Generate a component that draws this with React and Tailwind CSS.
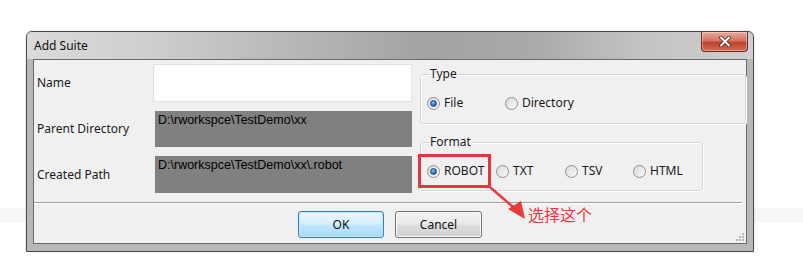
import React from "react";

function Radio({ checked }) {
  return (
    <span className="relative inline-flex h-[13px] w-[13px] shrink-0 items-center justify-center rounded-full border border-[#8e8f8f] bg-[linear-gradient(135deg,#dcdcdc,#f7f7f7)]">
      {checked && (
        <span className="h-[7px] w-[7px] rounded-full border border-[#1f4f7f] bg-[radial-gradient(circle_at_40%_35%,#8fc4f0,#2a6cb0_60%,#1c4f86)]" />
      )}
    </span>
  );
}

function RadioItem({ label, checked, w }) {
  return (
    <div className={`flex items-center gap-[4px] ${w}`}>
      <Radio checked={checked} />
      <span>{label}</span>
    </div>
  );
}

export default function App() {
  return (
    <div
      className="relative h-[256px] w-[803px] overflow-hidden bg-white text-[12px] text-[#1a1a1a]"
      style={{ fontFamily: '"Noto Sans", "Noto Sans CJK SC", sans-serif' }}
    >
      {/* faint background band */}
      <div className="absolute left-0 right-0 top-[208px] h-[14px] bg-[#f6f6f6]" />

      {/* dialog */}
      <div className="relative ml-[26px] mt-[31px] flex h-[221px] w-[728px] flex-col rounded-t-[6px] border border-[#4a4a4a] bg-[#b8b8b8] shadow-[0_0_2px_rgba(0,0,0,0.2)]">
        {/* title bar */}
        <div className="flex h-[27px] items-start justify-between rounded-t-[5px] bg-[linear-gradient(90deg,#dadada_0%,#d0d0d0_15%,#b9b9b9_35%,#a3a3a3_55%,#aaaaaa_70%,#c4c4c4_85%,#cfcfcf_100%)]">
          <span className="pl-[7px] pt-[6px] leading-[16px] text-[#111]">Add Suite</span>
          <div className="mr-[5px] flex h-[20px] w-[47px] items-center justify-center rounded-b-[4px] border border-t-0 border-[#6b2f2a] bg-[linear-gradient(180deg,#e9a99a_0%,#d47565_45%,#c0432f_55%,#d06b52_100%)] shadow-[inset_0_0_0_1px_rgba(255,255,255,0.35)]">
            <svg width="12" height="11" viewBox="0 0 12 11">
              <path d="M2 1.5 L10 9.5 M10 1.5 L2 9.5" stroke="#5a1f18" strokeWidth="3.6" strokeLinecap="round" />
              <path d="M2 1.5 L10 9.5 M10 1.5 L2 9.5" stroke="#ffffff" strokeWidth="2" strokeLinecap="round" />
            </svg>
          </div>
        </div>

        {/* body */}
        <div className="mx-[6px] flex h-[185px] flex-col border border-[#6a6a6a] bg-[#f0f0f0]">
          {/* top section */}
          <div className="flex h-[142px]">
            {/* left column */}
            <div className="flex w-[378px] flex-col pl-[3px] pt-[4px]">
              <div className="flex h-[38px] items-center">
                <span className="w-[116px]">Name</span>
                <div className="h-[38px] w-[259px] border border-[#e2e2e2] bg-white" />
              </div>
              <div className="mt-[9px] flex h-[36px] items-center">
                <span className="w-[118px]">Parent Directory</span>
                <div
                  className="h-[36px] w-[257px] bg-[#808080] pl-[3px] pt-[1px] text-[12.5px] leading-[16px] text-black"
                  style={{ fontFamily: '"Liberation Sans", sans-serif' }}
                >
                  D:\rworkspce\TestDemo\xx
                </div>
              </div>
              <div className="mt-[9px] flex h-[37px] items-center">
                <span className="w-[118px]">Created Path</span>
                <div
                  className="h-[37px] w-[257px] bg-[#808080] pl-[3px] pt-[1px] text-[12.5px] leading-[16px] text-black"
                  style={{ fontFamily: '"Liberation Sans", sans-serif' }}
                >
                  D:\rworkspce\TestDemo\xx\.robot
                </div>
              </div>
            </div>

            {/* right column */}
            <div className="ml-[8px] flex flex-col pt-[6px]">
              <fieldset className="h-[58px] w-[326px] rounded-[3px] border border-[#d6d6d6] px-[6px] shadow-[1px_1px_0_#ffffff,inset_1px_1px_0_#ffffff]">
                <legend className="ml-[2px] px-[1px] leading-[16px]">Type</legend>
                <div className="flex pt-[13px] leading-[16px]">
                  <RadioItem label="File" checked w="w-[78px]" />
                  <RadioItem label="Directory" />
                </div>
              </fieldset>
              <fieldset className="mt-[10px] h-[57px] w-[283px] rounded-[3px] border border-[#d6d6d6] px-[6px] shadow-[1px_1px_0_#ffffff,inset_1px_1px_0_#ffffff]">
                <legend className="ml-[2px] px-[1px] leading-[16px]">Format</legend>
                <div className="flex pt-[13px] leading-[16px]">
                  <RadioItem label="ROBOT" checked w="w-[69px]" />
                  <RadioItem label="TXT" w="w-[69px]" />
                  <RadioItem label="TSV" w="w-[68px]" />
                  <RadioItem label="HTML" />
                </div>
              </fieldset>
            </div>
          </div>

          {/* separator */}
          <div className="mr-[4px] h-[2px] border-t border-b border-t-[#a0a0a0] border-b-white" />

          {/* buttons */}
          <div className="relative flex flex-1 justify-center gap-[11px] pt-[7px]">
            <button className="h-[27px] w-[86px] rounded-[3px] border border-[#3c7fb1] bg-[linear-gradient(180deg,#eaf6fd_0%,#d9f0fc_45%,#bee6fd_55%,#a7d9f5_100%)] text-[12px] leading-[16px] text-[#111] shadow-[inset_0_0_0_1px_#b9eaff]">
              OK
            </button>
            <button className="h-[27px] w-[87px] rounded-[3px] border border-[#707070] bg-[linear-gradient(180deg,#f2f2f2_0%,#ebebeb_45%,#dddddd_55%,#cfcfcf_100%)] text-[12px] leading-[16px] text-[#111] shadow-[inset_0_0_0_1px_#fcfcfc]">
              Cancel
            </button>
            <svg className="absolute bottom-[1px] right-[1px]" width="10" height="10" viewBox="0 0 10 10">
              <g fill="#b5b5b5">
                <rect x="7" y="1" width="2" height="2" />
                <rect x="4" y="4" width="2" height="2" />
                <rect x="7" y="4" width="2" height="2" />
                <rect x="1" y="7" width="2" height="2" />
                <rect x="4" y="7" width="2" height="2" />
                <rect x="7" y="7" width="2" height="2" />
              </g>
            </svg>
          </div>
        </div>
      </div>

      {/* annotation: red box */}
      <div className="absolute left-[418px] top-[154px] h-[34px] w-[73px] border-[3px] border-[#e0383c]" />

      {/* annotation: arrow */}
      <svg className="absolute left-0 top-0" width="803" height="256" viewBox="0 0 803 256">
        <path d="M491 188 L513 207" stroke="#ea3a3a" strokeWidth="2.5" strokeLinecap="round" />
        <polygon points="508,209 521,201 525,219" fill="#ea3a3a" />
      </svg>

      {/* annotation: text */}
      <span
        className="absolute left-[528px] top-[203px] text-[16px] leading-[22px] text-[#e8383d]"
        style={{ fontFamily: '"Noto Sans CJK SC", sans-serif' }}
      >
        选择这个
      </span>
    </div>
  );
}
